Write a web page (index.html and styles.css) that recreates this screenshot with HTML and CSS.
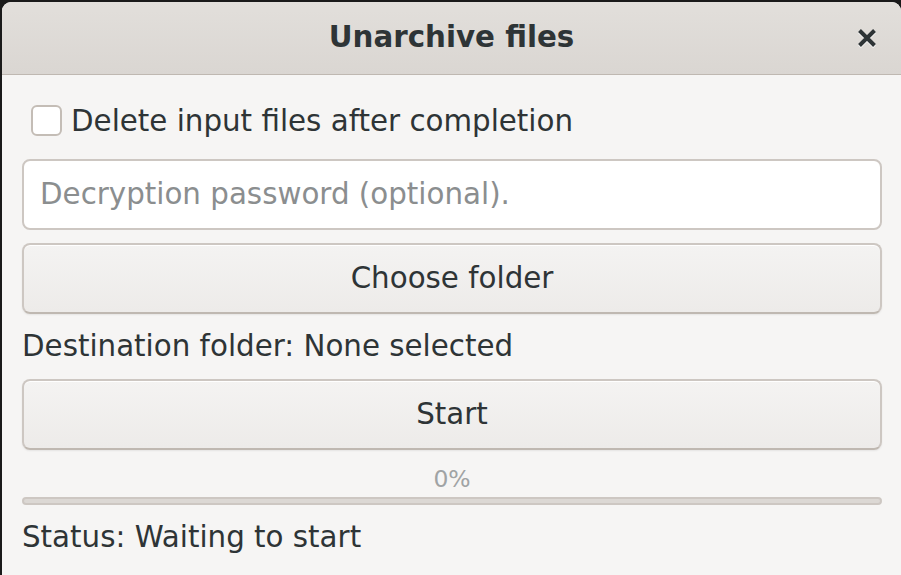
FILE: index.html
```html
<!DOCTYPE html>
<html>
<head>
<meta charset="utf-8">
<link rel="stylesheet" href="styles.css">
</head>
<body>
<div class="window">
  <header class="titlebar">
    <div class="title">Unarchive files</div>
    <button class="close" aria-label="Close">
      <svg width="18" height="18" viewBox="0 0 18 18"><path d="M1.5 1.5 L16.5 16.5 M16.5 1.5 L1.5 16.5" stroke="#2e3436" stroke-width="4" stroke-linecap="butt"/></svg>
    </button>
  </header>
  <main class="content">
    <label class="check-row">
      <span class="checkbox"></span>
      <span class="check-label">Delete input files after completion</span>
    </label>
    <div class="entry">Decryption password (optional).</div>
    <button class="btn btn-choose">Choose folder</button>
    <div class="label dest">Destination folder: None selected</div>
    <button class="btn btn-start">Start</button>
    <div class="percent">0%</div>
    <div class="progress"></div>
    <div class="label status">Status: Waiting to start</div>
  </main>
</div>
</body>
</html>
```
FILE: styles.css
```css
* { box-sizing: border-box; }
html, body {
  margin: 0;
  padding: 0;
  width: 901px;
  height: 575px;
  overflow: hidden;
  background: #1a1a1a;
}
body {
  font-family: "DejaVu Sans", sans-serif;
  color: #2e3436;
  padding: 2px 0 0 2px;
}
.window {
  width: 899px;
  height: 573px;
  background: #f6f5f4;
  border-radius: 9px 9px 0 0;
  overflow: hidden;
  display: flex;
  flex-direction: column;
}
.titlebar {
  height: 73px;
  flex: none;
  background: linear-gradient(#e2dfdb, #dad6d2);
  border-bottom: 1px solid #bfb8b1;
  display: flex;
  align-items: center;
  justify-content: center;
  position: relative;
}
.title {
  font-weight: bold;
  font-size: 29.33px;
  line-height: 1;
}
.close {
  position: absolute;
  right: 25px;
  top: 27px;
  width: 18px;
  height: 18px;
  padding: 0;
  border: 0;
  background: none;
  display: flex;
  filter: drop-shadow(0 1px 0 #ffffff);
}
.content {
  display: flex;
  flex-direction: column;
  padding: 0 19px 0 20px;
}
.check-row {
  display: flex;
  align-items: center;
  margin-top: 29px;
  height: 32px;
  margin-left: 9px;
}
.checkbox {
  width: 31px;
  height: 31px;
  border: 2px solid #c4bdb6;
  border-radius: 6px;
  background: #ffffff;
  flex: none;
}
.check-label {
  font-size: 29.33px;
  margin-left: 9px;
  line-height: 1;
  white-space: nowrap;
  padding-top: 3px;
}
.entry {
  margin-top: 23px;
  height: 71px;
  background: #ffffff;
  border: 2px solid #cdc7c2;
  border-radius: 8px;
  font-size: 29.33px;
  color: #8b8e8f;
  display: flex;
  align-items: center;
  padding-left: 16px;
  padding-bottom: 2px;
}
.btn {
  height: 71px;
  border: 2px solid #cdc7c2;
  border-bottom-color: #bfb8b1;
  border-radius: 8px;
  background: linear-gradient(#f4f3f2, #edebe9);
  box-shadow: inset 0 1px 0 #ffffff, 0 1px 2px rgba(0,0,0,0.07);
  font-family: "DejaVu Sans", sans-serif;
  font-size: 29.33px;
  color: #2e3436;
  padding: 0 0 2px 0;
  text-align: center;
}
.btn-choose { margin-top: 13px; }
.label {
  font-size: 29.33px;
  line-height: 38px;
  height: 38px;
  white-space: nowrap;
}
.dest { margin-top: 13px; }
.btn-start { margin-top: 14px; }
.percent {
  margin-top: 14px;
  height: 30px;
  line-height: 30px;
  font-size: 23.47px;
  color: #a0a3a4;
  text-align: center;
}
.progress {
  margin-top: 3px;
  height: 8px;
  border: 2px solid #cdc7c2;
  background: #dcd8d4;
  border-radius: 4px;
}
.status { margin-top: 13px; }
```
